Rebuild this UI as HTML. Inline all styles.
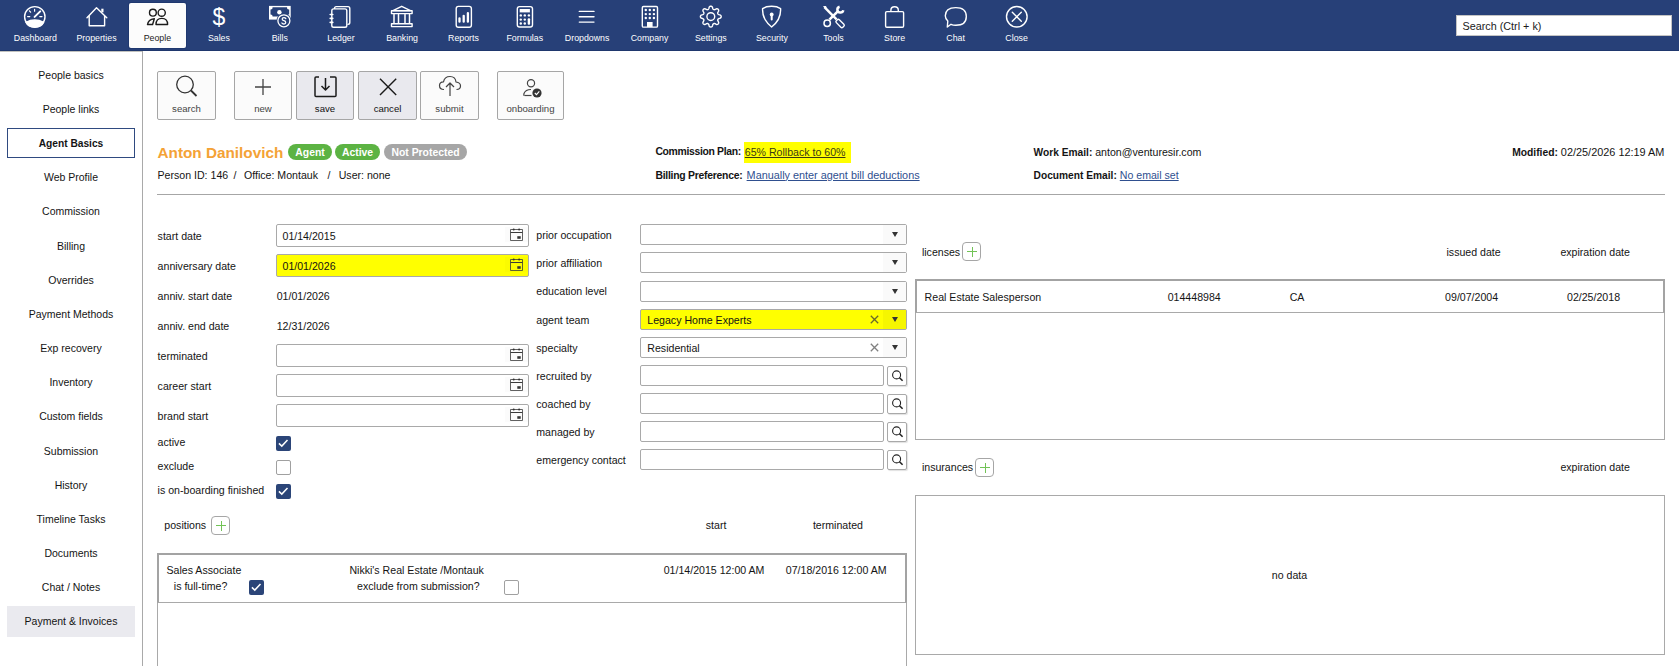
<!DOCTYPE html>
<html><head><meta charset="utf-8">
<style>
*{box-sizing:border-box}
html,body{margin:0;padding:0}
body{width:1679px;height:666px;overflow:hidden;position:relative;background:#fff;font-family:"Liberation Sans",sans-serif;color:#141414;font-size:10.6px}
.a{position:absolute;white-space:nowrap}
#nav{position:absolute;left:0;top:0;width:1679px;height:51px;background:#274078;border-bottom:1px solid #1f376d}
.nl{position:absolute;top:32px;width:80px;margin-left:-40px;text-align:center;color:#fff;font-size:8.8px;line-height:12px}
.act{position:absolute;left:129px;top:3px;width:57px;height:44.6px;background:#fcfcfc;border-radius:2px;box-shadow:0 0 0 1px #1f386f}
#search{position:absolute;left:1456px;top:15px;width:216px;height:21px;background:#fff;border:1px solid #c4c4c4;font-size:10.8px;line-height:20px;padding-left:5.5px;color:#1b1b1b}
#sideb{position:absolute;left:142px;top:51px;width:1px;height:615px;background:#a9a9a9}
.tb{position:absolute;top:71px;height:49px;border:1px solid #a6a6a6;border-radius:2px;background:#fbfbfb}
.tb.g{background:#e9e9ee}
.tb span{position:absolute;left:0;right:0;top:31px;text-align:center;font-size:9.6px;color:#444;line-height:12px}
.tb.g span{color:#111}
.tb svg{position:absolute;left:0;top:0}
.inp{position:absolute;height:23px;border:1px solid #a9a9a9;border-radius:2px;background:#fff}
.calbg{position:absolute;right:0;top:2px;width:23px;height:15px;background:rgba(0,0,0,.015)}
.inp svg{position:absolute;left:232px;top:3px}
.sel{position:absolute;left:640px;width:267px;height:21px;border:1px solid #a9a9a9;border-radius:2px;background:#fff}
.sel .bt{position:absolute;right:0;top:0;width:23px;height:19px;background:#fafafa}
.sel .tri{position:absolute;right:8px;top:6.5px;width:0;height:0;border-left:3.5px solid transparent;border-right:3.5px solid transparent;border-top:5.5px solid #333}
.sel .xx{position:absolute;left:229px;top:5px}
.lk{position:absolute;left:640px;width:244px;height:21px;border:1px solid #a9a9a9;border-radius:2px;background:#fff}
.lkb{position:absolute;left:887px;width:20px;height:20px;border:1px solid #a9a9a9;border-radius:2px;background:#fff;box-shadow:1px 1px 1px rgba(0,0,0,.12)}
.lkb svg{position:absolute;left:0;top:0}
.cb{position:absolute;width:15px;height:15px;border-radius:2px}
.cb svg{position:absolute;left:0;top:0}
.cb.on{background:#2b4578}
.cb.off{border:1px solid #a0a0a0;background:#fff}
.plus{position:absolute;width:19px;height:19px;border:1px solid #a6a6a6;border-radius:4px;background:#fff}
.plus:before{content:"";position:absolute;left:4px;top:8px;width:10px;height:1px;background:#72c356}
.plus:after{content:"";position:absolute;left:8.5px;top:3.5px;width:1px;height:10px;background:#72c356}
.badge{position:absolute;top:144px;height:16px;border-radius:8px;color:#fff;font-weight:bold;font-size:10.4px;line-height:17px;text-align:center;white-space:nowrap}
</style></head><body>
<div id="nav"><div class="act"></div>
<svg class="a" style="left:0;top:0" width="1100" height="50" viewBox="0 0 1100 50" fill="none" stroke="#fff" stroke-width="1.4" stroke-linecap="round" stroke-linejoin="round">
<!-- dashboard -->
<circle cx="34.8" cy="16.8" r="10.2"/>
<path d="M25.9 22.3 Q34.8 17.8 43.7 22.3 Q41.5 27.2 34.8 27.2 Q28.1 27.2 25.9 22.3Z" fill="#fff"/>
<path d="M34.6 16.9 L40.2 11.4" stroke-width="2"/>
<path d="M27.6 16.6 H29.8 M39.8 16.6 H42 M34.6 9.3 V11.2 M29.4 10.8 L30.6 12.2" stroke-width="1.2"/>
<!-- properties -->
<path d="M87 17.7 L96.5 7.8 L106.8 17.7 M89.2 15.6 V25.7 H104.6 V15.6"/><rect x="101.3" y="8.7" width="2.2" height="3.6" fill="#fff" stroke="none"/>
<!-- people (dark) -->
<g stroke="#1b1b1b" stroke-width="1.4">
<circle cx="152.9" cy="12.7" r="3.4"/><circle cx="161.7" cy="12.7" r="3.6"/>
<path d="M156 24.5 Q156 18.4 161.8 18.4 Q167.6 18.4 167.6 24.5Z"/>
<path d="M154.3 18.7 Q148.2 19.4 147.5 24.5 H152.6 Z"/>
</g>
<!-- sales $ -->
<text x="219" y="25" font-family="Liberation Sans" font-size="23" fill="#fff" stroke="none" text-anchor="middle">$</text>
<!-- bills -->
<rect x="269" y="5.9" width="21.7" height="13.7" fill="#fff" stroke="none"/>
<path d="M272.6 7.2 H287 A2 2 0 0 0 289.2 9.4 V14.5 A2 2 0 0 0 287 16.6 H272.6 A2 2 0 0 0 270.5 14.5 V9.4 A2 2 0 0 0 272.6 7.2Z" fill="#274078" stroke="none"/>
<circle cx="279.4" cy="12.3" r="2.2" fill="#fff" stroke="none"/>
<circle cx="283.9" cy="20.8" r="7.4" fill="#274078" stroke="none"/>
<circle cx="283.9" cy="20.8" r="6" stroke-width="1.3"/>
<path d="M285.8 18.6 Q285.2 17.6 283.9 17.6 Q282.2 17.6 282.2 19 Q282.2 20.3 283.9 20.7 Q285.7 21.1 285.7 22.5 Q285.7 24 283.9 24 Q282.4 24 281.9 23" stroke-width="1.3"/>
<!-- ledger -->
<path d="M334.5 8.4 Q334.5 6.6 336.3 6.6 H348 Q349.8 6.6 349.8 8.4 V22.6 Q349.8 24.4 348 24.4" />
<rect x="331.8" y="8.9" width="15" height="18.3" rx="1.8" fill="#274078"/>
<path d="M330.2 14.5 H332.8 M330.2 18.4 H332.8 M330.2 22.4 H332.8" stroke-width="1.6"/>
<!-- banking -->
<path d="M393 10.6 L401.7 6.3 L410.5 10.6 Z"/>
<rect x="391.5" y="10.8" width="20.6" height="2.8"/>
<path d="M394 14.5 V23 M398.5 14.5 V23 M405 14.5 V23 M409.5 14.5 V23" stroke-width="1.5"/>
<path d="M395.8 14.5 V23 M407.5 14.5 V23 M400.8 14.5 V23 M402.8 14.5 V23" stroke-width="0" />
<rect x="391.5" y="23.8" width="20.6" height="2.8"/>
<!-- reports -->
<rect x="456.2" y="6.4" width="15.2" height="20.8" rx="2.2"/>
<path d="M459.5 18.3 V21.7 M463.7 15.8 V21.7 M467.9 13.2 V21.7" stroke-width="2.3"/>
<!-- formulas -->
<rect x="517.3" y="6.6" width="15.2" height="20.4" rx="2.2"/>
<rect x="519.7" y="9" width="10.2" height="3.4" fill="#fff" stroke="none"/>
<g fill="#fff" stroke="none"><circle cx="520.8" cy="15.4" r="1.2"/><circle cx="524.8" cy="15.4" r="1.2"/><circle cx="528.9" cy="15.4" r="1.2"/><circle cx="520.8" cy="19.6" r="1.2"/><circle cx="524.8" cy="19.6" r="1.2"/><circle cx="520.8" cy="23.5" r="1.2"/><circle cx="524.8" cy="23.5" r="1.2"/><rect x="527.7" y="18.2" width="2.4" height="6.5" rx="1"/></g>
<!-- dropdowns -->
<path d="M579.3 11.4 H594 M579.3 16.8 H594 M579.3 22.1 H594"/>
<!-- company -->
<rect x="642.3" y="6.5" width="15.2" height="20.6" rx="1.2"/>
<g fill="#fff" stroke="none"><circle cx="645.8" cy="10" r="1.2"/><circle cx="649.8" cy="10" r="1.2"/><circle cx="653.9" cy="10" r="1.2"/><circle cx="645.8" cy="14.1" r="1.2"/><circle cx="649.8" cy="14.1" r="1.2"/><circle cx="653.9" cy="14.1" r="1.2"/><circle cx="645.8" cy="18" r="1.2"/><circle cx="649.8" cy="18" r="1.2"/><circle cx="653.9" cy="18" r="1.2"/><rect x="647" y="22" width="5.6" height="5" /></g>
<!-- settings -->
<path d="M710.80 6.20 L711.21 6.25 L711.60 6.40 L711.98 6.65 L712.32 7.03 L712.56 7.77 L712.74 8.52 L712.97 8.92 L713.20 9.21 L713.44 9.43 L713.71 9.58 L714.00 9.66 L714.33 9.68 L714.70 9.64 L715.14 9.52 L715.80 9.12 L716.50 8.76 L717.00 8.73 L717.45 8.82 L717.83 8.99 L718.15 9.25 L718.41 9.57 L718.58 9.95 L718.67 10.40 L718.64 10.90 L718.28 11.60 L717.88 12.26 L717.76 12.70 L717.72 13.07 L717.74 13.40 L717.82 13.69 L717.97 13.96 L718.19 14.20 L718.48 14.43 L718.88 14.66 L719.63 14.84 L720.37 15.08 L720.75 15.42 L721.00 15.80 L721.15 16.19 L721.20 16.60 L721.15 17.01 L721.00 17.40 L720.75 17.78 L720.37 18.12 L719.63 18.36 L718.88 18.54 L718.48 18.77 L718.19 19.00 L717.97 19.24 L717.82 19.51 L717.74 19.80 L717.72 20.13 L717.76 20.50 L717.88 20.94 L718.28 21.60 L718.64 22.30 L718.67 22.80 L718.58 23.25 L718.41 23.63 L718.15 23.95 L717.83 24.21 L717.45 24.38 L717.00 24.47 L716.50 24.44 L715.80 24.08 L715.14 23.68 L714.70 23.56 L714.33 23.52 L714.00 23.54 L713.71 23.62 L713.44 23.77 L713.20 23.99 L712.97 24.28 L712.74 24.68 L712.56 25.43 L712.32 26.17 L711.98 26.55 L711.60 26.80 L711.21 26.95 L710.80 27.00 L710.39 26.95 L710.00 26.80 L709.62 26.55 L709.28 26.17 L709.04 25.43 L708.86 24.68 L708.63 24.28 L708.40 23.99 L708.16 23.77 L707.89 23.62 L707.60 23.54 L707.27 23.52 L706.90 23.56 L706.46 23.68 L705.80 24.08 L705.10 24.44 L704.60 24.47 L704.15 24.38 L703.77 24.21 L703.45 23.95 L703.19 23.63 L703.02 23.25 L702.93 22.80 L702.96 22.30 L703.32 21.60 L703.72 20.94 L703.84 20.50 L703.88 20.13 L703.86 19.80 L703.78 19.51 L703.63 19.24 L703.41 19.00 L703.12 18.77 L702.72 18.54 L701.97 18.36 L701.23 18.12 L700.85 17.78 L700.60 17.40 L700.45 17.01 L700.40 16.60 L700.45 16.19 L700.60 15.80 L700.85 15.42 L701.23 15.08 L701.97 14.84 L702.72 14.66 L703.12 14.43 L703.41 14.20 L703.63 13.96 L703.78 13.69 L703.86 13.40 L703.88 13.07 L703.84 12.70 L703.72 12.26 L703.32 11.60 L702.96 10.90 L702.93 10.40 L703.02 9.95 L703.19 9.57 L703.45 9.25 L703.77 8.99 L704.15 8.82 L704.60 8.73 L705.10 8.76 L705.80 9.12 L706.46 9.52 L706.90 9.64 L707.27 9.68 L707.60 9.66 L707.89 9.58 L708.16 9.43 L708.40 9.21 L708.63 8.92 L708.86 8.52 L709.04 7.77 L709.28 7.03 L709.62 6.65 L710.00 6.40 L710.39 6.25 L710.80 6.20Z"/>
<circle cx="710.8" cy="16.6" r="3.9"/>
<!-- security -->
<path d="M771.6 6.3 Q766 6.3 762.6 8.6 Q762 19.5 771.6 27 Q781.2 19.5 780.6 8.6 Q777.2 6.3 771.6 6.3Z"/>
<circle cx="771.7" cy="14.4" r="1.9" fill="#fff" stroke="none"/>
<path d="M771.7 14.5 V19.5" stroke-width="2"/>
<!-- tools -->
<path d="M824.4 7.2 L836.6 19.4" stroke-width="2.4" stroke-linecap="butt"/>
<path d="M824 6.6 L826 6.6 L826 8.6Z" fill="#fff" stroke-width="1"/>
<rect x="-4.6" y="-2.1" width="9.2" height="4.2" rx="1.4" transform="translate(840.1 23.4) rotate(45)" stroke-width="1.4"/>
<path d="M829.4 19.6 L838.3 10.9" stroke-width="2.6" stroke-linecap="butt"/>
<path d="M843.3 10.3 A3 3 0 1 1 839.6 6.7" stroke-width="2.5" stroke-linecap="butt"/>
<circle cx="827.2" cy="23.3" r="3.2" stroke-width="1.5"/>
<!-- store -->
<rect x="885.6" y="11.6" width="18" height="15.6" rx="1.2"/>
<path d="M890.9 11.4 V10.2 Q890.9 6.7 894.6 6.7 Q898.3 6.7 898.3 10.2 V11.4"/>
<!-- chat -->
<path d="M947.8 21 Q945.3 18.8 945.3 15.8 Q945.3 7.6 955.8 7.6 Q966.3 7.6 966.3 16.5 Q966.3 25.3 955.8 25.3 Q953 25.3 951 24.3 L947.3 27 Z"/>
<!-- close -->
<circle cx="1016.8" cy="16.75" r="10.3"/>
<path d="M1012.3 12.3 L1021.3 21.2 M1021.3 12.3 L1012.3 21.2"/>
</svg>
<div class="nl" style="left:35.4px">Dashboard</div>
<div class="nl" style="left:96.5px">Properties</div>
<div class="nl" style="left:157.4px;color:#1b1b1b">People</div>
<div class="nl" style="left:218.9px">Sales</div>
<div class="nl" style="left:279.8px">Bills</div>
<div class="nl" style="left:341px">Ledger</div>
<div class="nl" style="left:402.1px">Banking</div>
<div class="nl" style="left:463.5px">Reports</div>
<div class="nl" style="left:524.8px">Formulas</div>
<div class="nl" style="left:587.1px">Dropdowns</div>
<div class="nl" style="left:649.6px">Company</div>
<div class="nl" style="left:710.8px">Settings</div>
<div class="nl" style="left:771.9px">Security</div>
<div class="nl" style="left:833.5px">Tools</div>
<div class="nl" style="left:894.6px">Store</div>
<div class="nl" style="left:955.6px">Chat</div>
<div class="nl" style="left:1016.6px">Close</div>
<div id="search">Search (Ctrl + k)</div>
</div>
<div id="sideb"></div>
<div class="a" style="left:0px;top:51px;width:142px;height:1px;background:#c2c2be"></div>
<div class="a" style="left:7px;top:128px;width:128px;height:30px;border:1px solid #2f4a80"></div>
<div class="a" style="left:7px;top:606px;width:128px;height:31px;background:#eaeaef"></div>
<div class="a" style="left:0.0px;width:142px;text-align:center;top:68.26px;font-size:10.5px;line-height:14px;">People basics</div>
<div class="a" style="left:0.0px;width:142px;text-align:center;top:102.38px;font-size:10.5px;line-height:14px;">People links</div>
<div class="a" style="left:0.0px;width:142px;text-align:center;top:136.61px;font-size:10.2px;line-height:14px;font-weight:bold;">Agent Basics</div>
<div class="a" style="left:0.0px;width:142px;text-align:center;top:169.62px;font-size:10.5px;line-height:14px;">Web Profile</div>
<div class="a" style="left:0.0px;width:142px;text-align:center;top:203.74px;font-size:10.5px;line-height:14px;">Commission</div>
<div class="a" style="left:0.0px;width:142px;text-align:center;top:238.86px;font-size:10.5px;line-height:14px;">Billing</div>
<div class="a" style="left:0.0px;width:142px;text-align:center;top:272.98px;font-size:10.5px;line-height:14px;">Overrides</div>
<div class="a" style="left:0.0px;width:142px;text-align:center;top:307.10px;font-size:10.5px;line-height:14px;">Payment Methods</div>
<div class="a" style="left:0.0px;width:142px;text-align:center;top:341.22px;font-size:10.5px;line-height:14px;">Exp recovery</div>
<div class="a" style="left:0.0px;width:142px;text-align:center;top:375.34px;font-size:10.5px;line-height:14px;">Inventory</div>
<div class="a" style="left:0.0px;width:142px;text-align:center;top:409.46px;font-size:10.5px;line-height:14px;">Custom fields</div>
<div class="a" style="left:0.0px;width:142px;text-align:center;top:443.58px;font-size:10.5px;line-height:14px;">Submission</div>
<div class="a" style="left:0.0px;width:142px;text-align:center;top:477.70px;font-size:10.5px;line-height:14px;">History</div>
<div class="a" style="left:0.0px;width:142px;text-align:center;top:511.82px;font-size:10.5px;line-height:14px;">Timeline Tasks</div>
<div class="a" style="left:0.0px;width:142px;text-align:center;top:545.94px;font-size:10.5px;line-height:14px;">Documents</div>
<div class="a" style="left:0.0px;width:142px;text-align:center;top:580.06px;font-size:10.5px;line-height:14px;">Chat / Notes</div>
<div class="a" style="left:0.0px;width:142px;text-align:center;top:614.18px;font-size:10.5px;line-height:14px;">Payment &amp; Invoices</div>
<div class="tb" style="left:157px;width:59px"><svg width="57" height="30" viewBox="0 0 57 30" fill="none" stroke="#333" stroke-width="1.3"><circle cx="27" cy="12.5" r="8.3"/><path d="M33 18.5 L38.5 24" stroke-width="1.8"/></svg><span>search</span></div>
<div class="tb" style="left:234px;width:58px"><svg width="56" height="30" viewBox="0 0 56 30" fill="none" stroke="#444" stroke-width="1.3"><path d="M28 7 V23 M20 15 H36"/></svg><span>new</span></div>
<div class="tb g" style="left:296px;width:58px"><svg width="56" height="30" viewBox="0 0 56 30" fill="none" stroke="#1b1b1b" stroke-width="1.5" stroke-linejoin="round"><path d="M22 5 H19 Q18 5 18 6 V23.5 Q18 24.5 19 24.5 H38 Q39 24.5 39 23.5 V6 Q39 5 38 5 H33"/><path d="M28.5 6 V18 M24.5 14 L28.5 18 L32.5 14"/></svg><span>save</span></div>
<div class="tb g" style="left:358px;width:59px"><svg width="57" height="30" viewBox="0 0 57 30" fill="none" stroke="#1b1b1b" stroke-width="1.4"><path d="M21 6.8 L37.2 23 M37.2 6.8 L21 23"/></svg><span>cancel</span></div>
<div class="tb" style="left:420px;width:59px"><svg width="57" height="30" viewBox="0 0 57 30" fill="none" stroke="#444" stroke-width="1.2" stroke-linejoin="round"><path d="M23 17.5 Q18.5 17.5 18.5 13.5 Q18.5 10 22.5 9.8 Q23.5 4.5 29 4.5 Q34.5 4.5 35 10 Q39.5 10.5 39.5 14 Q39.5 17.5 35.5 17.5"/><path d="M29 24 V11 M25 15 L29 11 L33 15"/></svg><span>submit</span></div>
<div class="tb" style="left:497px;width:67px"><svg width="65" height="30" viewBox="0 0 65 30" fill="none" stroke="#444" stroke-width="1.2"><circle cx="33" cy="11.2" r="3.6"/><path d="M26.5 23.5 Q25.5 23.5 26 21.5 Q27.5 17.5 33 17.5"/><path d="M26.5 23.5 H33.5"/><circle cx="39" cy="21" r="4.6" fill="#333" stroke="none"/><path d="M36.8 21 L38.5 22.6 L41.3 19.3" stroke="#fff" stroke-width="1.1"/></svg><span>onboarding</span></div>
<div class="a" style="left:157.5px;top:145.70px;font-size:15.3px;line-height:14px;font-weight:bold;color:#f4a236">Anton Danilovich</div>
<div class="badge" style="left:288px;width:44px;background:#5cb343">Agent</div>
<div class="badge" style="left:335px;width:45px;background:#5cb343">Active</div>
<div class="badge" style="left:384px;width:83px;background:#a6a6a6">Not Protected</div>
<div class="a" style="left:157.5px;top:167.93px;font-size:10.6px;line-height:14px;">Person ID: 146</div>
<div class="a" style="left:233.5px;top:167.93px;font-size:10.6px;line-height:14px;">/</div>
<div class="a" style="left:244.0px;top:167.93px;font-size:10.6px;line-height:14px;">Office: Montauk</div>
<div class="a" style="left:327.6px;top:167.93px;font-size:10.6px;line-height:14px;">/</div>
<div class="a" style="left:338.7px;top:167.93px;font-size:10.6px;line-height:14px;">User: none</div>
<div class="a" style="left:744px;top:142px;width:107px;height:21px;background:#ffff00"></div>
<div class="a" style="left:655.4px;top:145.40px;font-size:10.4px;line-height:14px;letter-spacing:-0.32px"><b>Commission Plan:</b></div>
<div class="a" style="left:744.8px;top:144.63px;font-size:10.6px;line-height:14px;text-decoration:underline;color:#3a3a14">65% Rollback to 60%</div>
<div class="a" style="left:655.4px;top:168.60px;font-size:10.4px;line-height:14px;letter-spacing:-0.25px"><b>Billing Preference:</b></div>
<div class="a" style="left:746.6px;top:167.84px;font-size:10.85px;line-height:14px;text-decoration:underline;color:#2f4f8f">Manually enter agent bill deductions</div>
<div class="a" style="left:1033.6px;top:145.33px;font-size:10.6px;line-height:14px;"><b style="font-size:10.2px">Work Email:</b> anton@venturesir.com</div>
<div class="a" style="left:1033.6px;top:167.83px;font-size:10.6px;line-height:14px;"><b style="font-size:10.2px">Document Email:</b> <span style="text-decoration:underline;color:#2f4f8f">No email set</span></div>
<div class="a" style="right:14.6px;top:145.33px;font-size:10.6px;line-height:14px;"><b style="font-size:10.3px">Modified:</b> <span style="font-size:10.9px">02/25/2026 12:19 AM</span></div>
<div class="a" style="left:157px;top:194px;width:1508px;height:1px;background:#a6a6a6"></div>
<div class="a" style="left:157.6px;top:228.83px;font-size:10.6px;line-height:14px;">start date</div>
<div class="a" style="left:157.6px;top:258.93px;font-size:10.6px;line-height:14px;">anniversary date</div>
<div class="a" style="left:157.6px;top:288.63px;font-size:10.6px;line-height:14px;">anniv. start date</div>
<div class="a" style="left:157.6px;top:319.33px;font-size:10.6px;line-height:14px;">anniv. end date</div>
<div class="a" style="left:157.6px;top:349.13px;font-size:10.6px;line-height:14px;">terminated</div>
<div class="a" style="left:157.6px;top:379.23px;font-size:10.6px;line-height:14px;">career start</div>
<div class="a" style="left:157.6px;top:409.13px;font-size:10.6px;line-height:14px;">brand start</div>
<div class="a" style="left:157.6px;top:434.93px;font-size:10.6px;line-height:14px;">active</div>
<div class="a" style="left:157.6px;top:458.93px;font-size:10.6px;line-height:14px;">exclude</div>
<div class="a" style="left:157.6px;top:482.63px;font-size:10.6px;line-height:14px;">is on-boarding finished</div>
<div class="inp" style="left:276px;top:224px;width:253px;background:#fff"><div class="calbg"></div><svg width="15" height="15" viewBox="0 0 15 15" fill="none" stroke="#3a3a3a" stroke-width="1"><path d="M1.5 1.5 V12.5 H13.5 V1.5 H1.5" stroke-width="0.8"/><path d="M1.5 4.5 H13.5"/><circle cx="4.7" cy="1.4" r="1" fill="#333" stroke="none"/><circle cx="10.1" cy="1.4" r="1" fill="#333" stroke="none"/><rect x="8.3" y="8.2" width="3.4" height="2.6" fill="#333" stroke="none"/></svg>
</div>
<div class="a" style="left:282.5px;top:228.83px;font-size:10.6px;line-height:14px;">01/14/2015</div>
<div class="inp" style="left:276px;top:254px;width:253px;background:#ffff00"><div class="calbg"></div><svg width="15" height="15" viewBox="0 0 15 15" fill="none" stroke="#3a3a3a" stroke-width="1"><path d="M1.5 1.5 V12.5 H13.5 V1.5 H1.5" stroke-width="0.8"/><path d="M1.5 4.5 H13.5"/><circle cx="4.7" cy="1.4" r="1" fill="#333" stroke="none"/><circle cx="10.1" cy="1.4" r="1" fill="#333" stroke="none"/><rect x="8.3" y="8.2" width="3.4" height="2.6" fill="#333" stroke="none"/></svg>
</div>
<div class="a" style="left:282.5px;top:258.83px;font-size:10.6px;line-height:14px;">01/01/2026</div>
<div class="inp" style="left:276px;top:344px;width:253px;background:#fff"><div class="calbg"></div><svg width="15" height="15" viewBox="0 0 15 15" fill="none" stroke="#3a3a3a" stroke-width="1"><path d="M1.5 1.5 V12.5 H13.5 V1.5 H1.5" stroke-width="0.8"/><path d="M1.5 4.5 H13.5"/><circle cx="4.7" cy="1.4" r="1" fill="#333" stroke="none"/><circle cx="10.1" cy="1.4" r="1" fill="#333" stroke="none"/><rect x="8.3" y="8.2" width="3.4" height="2.6" fill="#333" stroke="none"/></svg>
</div>
<div class="inp" style="left:276px;top:374px;width:253px;background:#fff"><div class="calbg"></div><svg width="15" height="15" viewBox="0 0 15 15" fill="none" stroke="#3a3a3a" stroke-width="1"><path d="M1.5 1.5 V12.5 H13.5 V1.5 H1.5" stroke-width="0.8"/><path d="M1.5 4.5 H13.5"/><circle cx="4.7" cy="1.4" r="1" fill="#333" stroke="none"/><circle cx="10.1" cy="1.4" r="1" fill="#333" stroke="none"/><rect x="8.3" y="8.2" width="3.4" height="2.6" fill="#333" stroke="none"/></svg>
</div>
<div class="inp" style="left:276px;top:404px;width:253px;background:#fff"><div class="calbg"></div><svg width="15" height="15" viewBox="0 0 15 15" fill="none" stroke="#3a3a3a" stroke-width="1"><path d="M1.5 1.5 V12.5 H13.5 V1.5 H1.5" stroke-width="0.8"/><path d="M1.5 4.5 H13.5"/><circle cx="4.7" cy="1.4" r="1" fill="#333" stroke="none"/><circle cx="10.1" cy="1.4" r="1" fill="#333" stroke="none"/><rect x="8.3" y="8.2" width="3.4" height="2.6" fill="#333" stroke="none"/></svg>
</div>
<div class="a" style="left:276.7px;top:288.63px;font-size:10.6px;line-height:14px;">01/01/2026</div>
<div class="a" style="left:276.7px;top:319.33px;font-size:10.6px;line-height:14px;">12/31/2026</div>
<div class="cb on" style="left:276px;top:436px"><svg width="15" height="15" viewBox="0 0 15 15"><path d="M2.9 7.4 L5.8 10.1 L11.5 4.1" fill="none" stroke="#fff" stroke-width="1.5"/></svg></div>
<div class="cb off" style="left:276px;top:460px"></div>
<div class="cb on" style="left:276px;top:484px"><svg width="15" height="15" viewBox="0 0 15 15"><path d="M2.9 7.4 L5.8 10.1 L11.5 4.1" fill="none" stroke="#fff" stroke-width="1.5"/></svg></div>
<div class="a" style="left:536.3px;top:227.63px;font-size:10.6px;line-height:14px;">prior occupation</div>
<div class="a" style="left:536.3px;top:255.63px;font-size:10.6px;line-height:14px;">prior affiliation</div>
<div class="a" style="left:536.3px;top:283.83px;font-size:10.6px;line-height:14px;">education level</div>
<div class="a" style="left:536.3px;top:312.83px;font-size:10.6px;line-height:14px;">agent team</div>
<div class="a" style="left:536.3px;top:340.63px;font-size:10.6px;line-height:14px;">specialty</div>
<div class="a" style="left:536.3px;top:368.83px;font-size:10.6px;line-height:14px;">recruited by</div>
<div class="a" style="left:536.3px;top:396.73px;font-size:10.6px;line-height:14px;">coached by</div>
<div class="a" style="left:536.3px;top:424.73px;font-size:10.6px;line-height:14px;">managed by</div>
<div class="a" style="left:536.3px;top:452.53px;font-size:10.6px;line-height:14px;">emergency contact</div>
<div class="sel" style="top:224px;background:#fff"><div class="bt" style="background:#fafafa"></div><div class="tri"></div></div>
<div class="sel" style="top:252px;background:#fff"><div class="bt" style="background:#fafafa"></div><div class="tri"></div></div>
<div class="sel" style="top:281px;background:#fff"><div class="bt" style="background:#fafafa"></div><div class="tri"></div></div>
<div class="sel" style="top:309px;background:#ffff00"><div class="bt" style="background:#f6f600"></div><div class="tri"></div><svg class="xx" width="9" height="9" viewBox="0 0 9 9"><path d="M0.8 0.8 L8.2 8.2 M8.2 0.8 L0.8 8.2" stroke="#6a6a2a" stroke-width="1.3"/></svg></div>
<div class="a" style="left:647.3px;top:313.33px;font-size:10.6px;line-height:14px;">Legacy Home Experts</div>
<div class="sel" style="top:337px;background:#fff"><div class="bt" style="background:#fafafa"></div><div class="tri"></div><svg class="xx" width="9" height="9" viewBox="0 0 9 9"><path d="M0.8 0.8 L8.2 8.2 M8.2 0.8 L0.8 8.2" stroke="#808080" stroke-width="1.3"/></svg></div>
<div class="a" style="left:647.3px;top:341.33px;font-size:10.6px;line-height:14px;">Residential</div>
<div class="lk" style="top:365px"></div><div class="lkb" style="top:366px"><svg width="19" height="18" viewBox="0 0 19 18" fill="none" stroke="#222" stroke-width="1.1"><circle cx="8.6" cy="7.9" r="4"/><path d="M11.5 10.8 L14.6 13.8" stroke-width="1.6"/></svg>
</div>
<div class="lk" style="top:393px"></div><div class="lkb" style="top:394px"><svg width="19" height="18" viewBox="0 0 19 18" fill="none" stroke="#222" stroke-width="1.1"><circle cx="8.6" cy="7.9" r="4"/><path d="M11.5 10.8 L14.6 13.8" stroke-width="1.6"/></svg>
</div>
<div class="lk" style="top:421px"></div><div class="lkb" style="top:422px"><svg width="19" height="18" viewBox="0 0 19 18" fill="none" stroke="#222" stroke-width="1.1"><circle cx="8.6" cy="7.9" r="4"/><path d="M11.5 10.8 L14.6 13.8" stroke-width="1.6"/></svg>
</div>
<div class="lk" style="top:449px"></div><div class="lkb" style="top:450px"><svg width="19" height="18" viewBox="0 0 19 18" fill="none" stroke="#222" stroke-width="1.1"><circle cx="8.6" cy="7.9" r="4"/><path d="M11.5 10.8 L14.6 13.8" stroke-width="1.6"/></svg>
</div>
<div class="a" style="left:921.9px;top:245.03px;font-size:10.6px;line-height:14px;">licenses</div>
<div class="plus" style="left:962px;top:242px"></div>
<div class="a" style="left:1446.5px;top:245.23px;font-size:10.6px;line-height:14px;">issued date</div>
<div class="a" style="left:1560.4px;top:245.23px;font-size:10.6px;line-height:14px;">expiration date</div>
<div class="a" style="left:915px;top:279px;width:750px;height:161px;border:1px solid #a9a9a9"></div>
<div class="a" style="left:915px;top:279px;width:750px;height:34px;border:2px solid #a3a3a3;border-bottom:1px solid #a9a9a9"></div>
<div class="a" style="left:924.6px;top:289.93px;font-size:10.6px;line-height:14px;">Real Estate Salesperson</div>
<div class="a" style="left:1167.7px;top:289.93px;font-size:10.6px;line-height:14px;">014448984</div>
<div class="a" style="left:1289.7px;top:289.93px;font-size:10.6px;line-height:14px;">CA</div>
<div class="a" style="left:1445.1px;top:289.93px;font-size:10.6px;line-height:14px;">09/07/2004</div>
<div class="a" style="left:1567.0px;top:289.93px;font-size:10.6px;line-height:14px;">02/25/2018</div>
<div class="a" style="left:921.9px;top:459.83px;font-size:10.6px;line-height:14px;">insurances</div>
<div class="plus" style="left:975px;top:458px"></div>
<div class="a" style="left:1560.4px;top:459.83px;font-size:10.6px;line-height:14px;">expiration date</div>
<div class="a" style="left:915px;top:495px;width:750px;height:160px;border:1px solid #a9a9a9"></div>
<div class="a" style="left:1189.5px;width:200px;text-align:center;top:567.83px;font-size:10.6px;line-height:14px;">no data</div>
<div class="a" style="left:164.3px;top:518.13px;font-size:10.6px;line-height:14px;">positions</div>
<div class="plus" style="left:211px;top:516px"></div>
<div class="a" style="left:705.8px;top:517.73px;font-size:10.6px;line-height:14px;">start</div>
<div class="a" style="left:812.9px;top:517.73px;font-size:10.6px;line-height:14px;">terminated</div>
<div class="a" style="left:157px;top:553px;width:750px;height:130px;border:1px solid #a9a9a9"></div>
<div class="a" style="left:157px;top:553px;width:750px;height:50px;border:2px solid #a3a3a3;border-bottom:1px solid #a9a9a9"></div>
<div class="a" style="left:166.5px;top:563.13px;font-size:10.6px;line-height:14px;">Sales Associate</div>
<div class="a" style="left:173.8px;top:579.13px;font-size:10.6px;line-height:14px;">is full-time?</div>
<div class="cb on" style="left:249px;top:580px"><svg width="15" height="15" viewBox="0 0 15 15"><path d="M2.9 7.4 L5.8 10.1 L11.5 4.1" fill="none" stroke="#fff" stroke-width="1.5"/></svg></div>
<div class="a" style="left:349.4px;top:563.13px;font-size:10.6px;line-height:14px;">Nikki's Real Estate /Montauk</div>
<div class="a" style="left:357.1px;top:579.13px;font-size:10.6px;line-height:14px;">exclude from submission?</div>
<div class="cb off" style="left:504px;top:580px"></div>
<div class="a" style="left:663.7px;top:563.13px;font-size:10.6px;line-height:14px;">01/14/2015 12:00 AM</div>
<div class="a" style="left:785.8px;top:563.13px;font-size:10.6px;line-height:14px;">07/18/2016 12:00 AM</div>
</body></html>
